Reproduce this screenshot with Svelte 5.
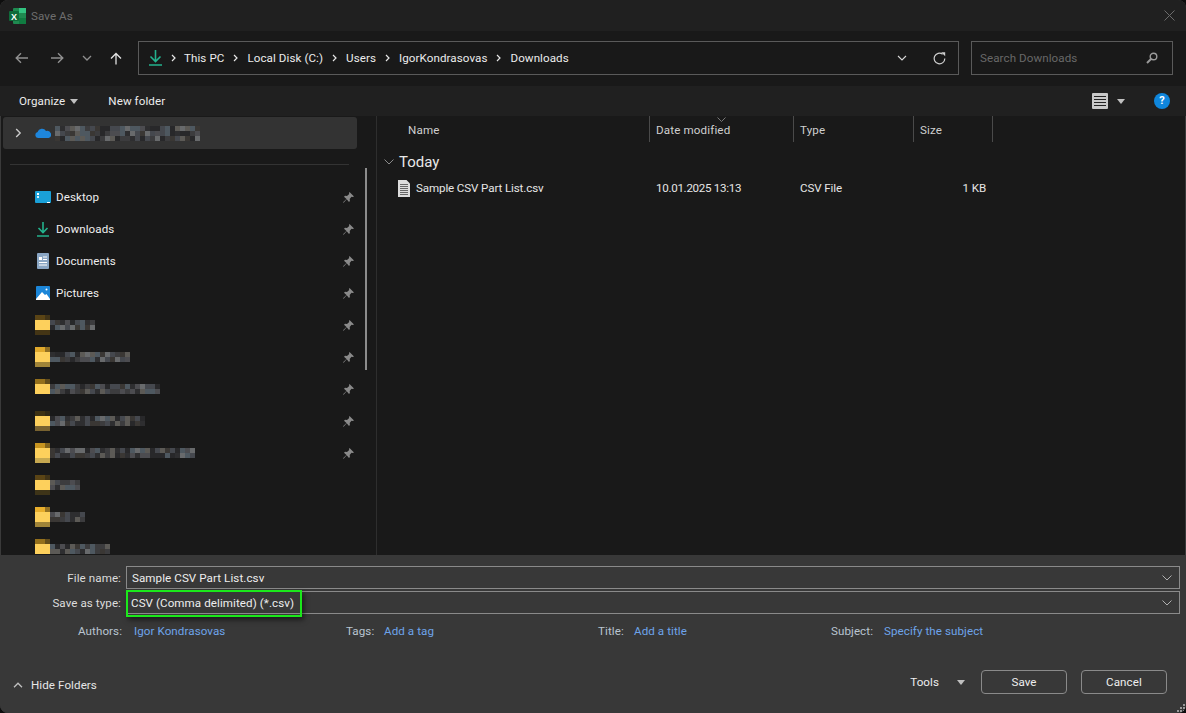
<script lang="ts">
  // fake blur blocks for the hidden folder names
  function mosaic(width: number, seed: number, rows = 2) {
    const cells = [];
    let s = seed * 97 + 13;
    const tones = ['#3c3c3e', '#4c4c50', '#2e2e30', '#5c5a56', '#45484e', '#3a3734', '#686a6c', '#28282a', '#4e5860'];
    for (let y = 0; y < rows; y++) {
      for (let x = 0; x < width; x += 5) {
        s = (s * 31 + 7) % 1009;
        cells.push({ x, y: y * 5, fill: tones[s % tones.length] });
      }
    }
    return cells;
  }

  const pinned = [
    { name: 'Desktop', icon: 'desktop' },
    { name: 'Downloads', icon: 'downloads' },
    { name: 'Documents', icon: 'documents' },
    { name: 'Pictures', icon: 'pictures' },
  ];
  const folders = [
    { width: 45, pin: true, top: '#5a4415', low: '#443515' },
    { width: 80, pin: true, top: '#e0a92c', low: '#a08438' },
    { width: 110, pin: true, top: '#94701c', low: '' },
    { width: 95, pin: true, top: '#3e3214', low: '#786230' },
    { width: 145, pin: true, top: '#c79420', low: '#c6a850' },
    { width: 30, pin: false, top: '#5a4415', low: '#3e3418' },
    { width: 35, pin: false, top: '#e8ae2c', low: '#a08438' },
    { width: 60, pin: false, top: '#94701c', low: '' },
  ];
  const crumbs = ['This PC', 'Local Disk (C:)', 'Users', 'IgorKondrasovas', 'Downloads'];
  const meta = [
    { label: 'Authors:', value: 'Igor Kondrasovas' },
    { label: 'Tags:', value: 'Add a tag' },
    { label: 'Title:', value: 'Add a title' },
    { label: 'Subject:', value: 'Specify the subject' },
  ];
</script>

<div class="window">
  <header class="title">
    <svg class="excel" width="17" height="16" viewBox="0 0 17 16">
      <rect x="4" y="0" width="13" height="16" rx="1" fill="#1f8a50" />
      <rect x="10" y="0" width="7" height="5" fill="#33c481" />
      <rect x="10" y="10" width="7" height="6" fill="#107c41" />
      <rect x="0" y="3" width="10" height="10" rx="1" fill="#0f6b3a" />
      <text x="5" y="11.5" text-anchor="middle" class="excel-x">X</text>
    </svg>
    <span>Save As</span>
    <svg class="close" width="11" height="11" viewBox="0 0 11 11"><path d="M.5.5l10 10M10.500.5l-10 10" stroke="#6c6c6c" fill="none" /></svg>
  </header>

  <nav class="nav">
    <div class="nav-buttons">
      <svg width="14" height="12" viewBox="0 0 14 12"><path d="M13 6H1.500M6 1.200 1.200 6 6 10.800" stroke="#8f8f8f" stroke-width="1.4" fill="none" /></svg>
      <svg width="14" height="12" viewBox="0 0 14 12"><path d="M1 6h11.500M8 1.200 12.800 6 8 10.800" stroke="#8f8f8f" stroke-width="1.4" fill="none" /></svg>
      <svg width="10" height="6" viewBox="0 0 10 6"><path d="M1 1l4 4 4-4" stroke="#8f8f8f" stroke-width="1.3" fill="none" /></svg>
      <svg width="12" height="13" viewBox="0 0 12 13"><path d="M6 12.500V1.500M1 6.500l5-5 5 5" stroke="#e4e4e4" stroke-width="1.3" fill="none" /></svg>
    </div>
    <div class="address">
      <svg width="13" height="16" viewBox="0 0 13 16"><path d="M6.500 0v11M1.500 6.500l5 5 5-5" stroke="#23b28d" stroke-width="1.6" fill="none" /><path d="M0 15h13" stroke="#23b28d" stroke-width="1.6" /></svg>
      {#each crumbs as crumb, i}
        <svg class="sep" class:first={i === 0} width="5" height="8" viewBox="0 0 5 8"><path d="M1 1l3 3-3 3" stroke="#e8e8e8" stroke-width="1.2" fill="none" /></svg>
        <span class="crumb">{crumb}</span>
      {/each}
      <svg class="addr-chevron" width="10" height="6" viewBox="0 0 10 6"><path d="M1 1l4 4 4-4" stroke="#d8d8d8" stroke-width="1.1" fill="none" /></svg>
      <svg class="refresh" width="13" height="13" viewBox="0 0 13 13"><path d="M11.800 6.500A5.300 5.300 0 1 1 9.600 2.200" stroke="#d0d0d0" stroke-width="1.2" fill="none" /><path d="M8.200.2h4v4z" fill="#d0d0d0" /></svg>
    </div>
    <div class="search">
      <span>Search Downloads</span>
      <svg width="12" height="12" viewBox="0 0 12 12"><circle cx="7.500" cy="4.500" r="3.300" stroke="#9a9a9a" stroke-width="1.4" fill="none" /><path d="M5 7 1 11" stroke="#9a9a9a" stroke-width="2" /></svg>
    </div>
  </nav>

  <div class="toolbar">
    <span class="organize">Organize</span>
    <span class="caret"></span>
    <span class="new-folder">New folder</span>
    <svg class="views" width="16" height="16" viewBox="0 0 16 16">
      <rect width="16" height="16" rx="1" fill="#c9c9c9" />
      <path d="M2 3.500h12M2 6.500h12M2 9.500h12M2 12.500h12" stroke="#222" />
    </svg>
    <span class="caret views-caret"></span>
    <span class="help">?</span>
  </div>

  <main class="main">
    <aside class="side">
      <div class="onedrive">
        <svg width="7" height="10" viewBox="0 0 7 10"><path d="M1.200 1l4 4-4 4" stroke="#c8c8c8" stroke-width="1.4" fill="none" /></svg>
        <svg class="cloud" width="16" height="10" viewBox="0 0 16 10"><path d="M3 10a3 3 0 0 1-.4-5.900A4.600 4.600 0 0 1 11 3a3.500 3.500 0 0 1 2.600 7z" fill="#1e86dc" /></svg>
        <svg class="blur" width="145" height="15">
          {#each mosaic(145, 3, 3) as c}
            <rect x={c.x} y={c.y} width="5" height="5" fill={c.fill} />
          {/each}
        </svg>
      </div>
      <div class="rule"></div>
      <ul class="places">
        {#each pinned as item}
          <li>
            <span class="place-icon">
              {#if item.icon === 'desktop'}
                <svg width="16" height="13" viewBox="0 0 16 13"><rect width="16" height="12" rx="1" fill="#1aa0d8" /><rect x="2" y="2" width="2" height="2" fill="#fff" /><rect x="2" y="5" width="2" height="2" fill="#d8f0fa" /><rect x="12" y="11" width="3" height="1" fill="#fff" /></svg>
              {:else if item.icon === 'downloads'}
                <svg width="12" height="15" viewBox="0 0 12 15"><path d="M6 0v10M1.500 6l4.500 4.500L10.500 6" stroke="#23b28d" stroke-width="1.6" fill="none" /><path d="M0 14h12" stroke="#23b28d" stroke-width="1.6" /></svg>
              {:else if item.icon === 'documents'}
                <svg width="12" height="16" viewBox="0 0 12 16"><rect width="12" height="16" rx="1" fill="#8aa6c4" /><path d="M2 4h3v3H2z" fill="#fff" /><path d="M6 4h4M6 6.500h4M2 9.500h8M2 12h8" stroke="#fff" /></svg>
              {:else}
                <svg width="14" height="14" viewBox="0 0 14 14"><rect width="14" height="14" rx="1" fill="#1c86d8" /><path d="M0 13 6 6l3 3 1.500-1 3.500 5v1H0z" fill="#fff" /><circle cx="10.500" cy="3.500" r="1" fill="#fff" /></svg>
              {/if}
            </span>
            <span class="place-name">{item.name}</span>
            <svg class="pin" width="11" height="11" viewBox="0 0 11 11"><path d="M6.500 0 11 4.500 9.800 5 8.500 4.800 6.700 7l.2 2L6 10 3.700 7.300.6 10.800 0 10.300 3.500 7 1 4.800l1-1 2 .2 2.200-1.900L6 1z" fill="#8a8a8a" /></svg>
          </li>
        {/each}
        {#each folders as folder, i}
          <li>
            <svg class="mosaic" width={folder.width + 15} height="20">
              <rect x="0" y="0" width="10" height="5" fill={folder.top} />
              <rect x="10" y="0" width="5" height="5" fill={folder.top} opacity="0.6" />
              <rect x="0" y="5" width="15" height="10" fill="#fdd05c" />
              {#if folder.low}
                <rect x="0" y="15" width="15" height="5" fill={folder.low} />
              {/if}
              {#each mosaic(folder.width, i + 5) as c}
                <rect x={c.x + 15} y={c.y + 5} width="5" height="5" fill={c.fill} />
              {/each}
            </svg>
            {#if folder.pin}
              <svg class="pin" width="11" height="11" viewBox="0 0 11 11"><path d="M6.500 0 11 4.500 9.800 5 8.500 4.800 6.700 7l.2 2L6 10 3.700 7.300.6 10.800 0 10.300 3.500 7 1 4.800l1-1 2 .2 2.200-1.900L6 1z" fill="#8a8a8a" /></svg>
            {/if}
          </li>
        {/each}
      </ul>
      <div class="scrollbar"></div>
    </aside>

    <section class="files">
      <div class="head">
        <span class="col-name">Name</span>
        <span class="col-date">Date modified<svg class="sort" width="9" height="5" viewBox="0 0 9 5"><path d="M.5.500l4 4 4-4" stroke="#777" fill="none" /></svg></span>
        <span class="col-type">Type</span>
        <span class="col-size">Size</span>
      </div>
      <div class="group">
        <svg width="10" height="6" viewBox="0 0 10 6"><path d="M.5.500 5 5 9.500.5" stroke="#8a8a8a" fill="none" /></svg>
        <span>Today</span>
      </div>
      <div class="file">
        <span class="col-name file-name">
          <svg width="12" height="17" viewBox="0 0 12 17"><path d="M0 0h8.500L12 3.500V17H0z" fill="#dcdcdc" /><path d="M2 4.500h8M2 6.500h8M2 8.500h8M2 10.500h8M2 12.500h8M2 14.500h8" stroke="#666" /></svg>
          Sample CSV Part List.csv
        </span>
        <span class="col-date">10.01.2025 13:13</span>
        <span class="col-type">CSV File</span>
        <span class="col-size size-val">1 KB</span>
      </div>
    </section>
  </main>

  <footer class="bottom">
    <div class="field">
      <label for="file-name">File name:</label>
      <div class="combo">
        <input id="file-name" value="Sample CSV Part List.csv" />
        <svg width="10" height="6" viewBox="0 0 10 6"><path d="M.5.500 5 5 9.500.5" stroke="#b0b0b0" fill="none" /></svg>
      </div>
    </div>
    <div class="field second">
      <label for="file-type">Save as type:</label>
      <div class="combo">
        <input id="file-type" class="type" value="CSV (Comma delimited) (*.csv)" />
        <svg width="10" height="6" viewBox="0 0 10 6"><path d="M.5.500 5 5 9.500.5" stroke="#b0b0b0" fill="none" /></svg>
        <div class="highlight"></div>
      </div>
    </div>
    <div class="meta">
      {#each meta as m}
        <span class="meta-label">{m.label}</span>
        <span class="meta-value">{m.value}</span>
      {/each}
    </div>
    <div class="actions">
      <svg class="hide-chevron" width="10" height="6" viewBox="0 0 10 6"><path d="M1 5.200 5 1.200l4 4" stroke="#c0c0c0" stroke-width="1.300" fill="none" /></svg>
      <span class="hide">Hide Folders</span>
      <span class="tools">Tools</span>
      <span class="caret tools-caret"></span>
      <button class="save">Save</button>
      <button class="cancel">Cancel</button>
    </div>
    <svg class="grip" width="8" height="8" viewBox="0 0 8 8"><path d="M6 0h2v2H6zM3 3h2v2H3zM6 3h2v2H6zM0 6h2v2H0zM3 6h2v2H3zM6 6h2v2H6z" fill="#9a9a9a" /></svg>
  </footer>
</div>

<style>
  :global(body) { margin: 0; background: #0e0e0e; }
  .window {
    position: relative; width: 1186px; height: 713px; box-sizing: border-box; overflow: hidden;
    display: flex; flex-direction: column; border-radius: 8px;
    font: 11.6px/16px Roboto, "Noto Sans", sans-serif; letter-spacing: 0.08px; color: #e6e6e6;
    background: #191919; box-shadow: inset 0 0 0 1px #3a3a3a;
  }
  .title { height: 31px; flex: none; display: flex; align-items: center; padding: 0 11px 0 9px; background: #202020; color: #6e6e6e; }
  .excel { margin-right: 5px; }
  .excel-x { font: bold 9px "Liberation Sans", sans-serif; fill: #fff; }
  .close { margin-left: auto; }

  .nav { height: 55px; flex: none; display: flex; align-items: flex-start; padding-top: 10px; box-sizing: border-box; background: #191919; }
  .nav-buttons { width: 138px; height: 34px; flex: none; display: flex; align-items: center; box-sizing: border-box; padding-left: 15px; }
  .nav-buttons svg:nth-child(1) { margin-right: 21px; }
  .nav-buttons svg:nth-child(2) { margin-right: 18px; }
  .nav-buttons svg:nth-child(3) { margin-right: 18px; }
  .address {
    width: 821px; height: 34px; box-sizing: border-box; flex: none; display: flex; align-items: center;
    padding: 0 12px 0 10px; border: 1px solid #5a5a5a; background: #191919;
  }
  .sep { margin: 0 9px; }
  .sep.first { margin-right: 8px; }
  .crumb { color: #ececec; }
  .addr-chevron { margin-left: auto; margin-right: 26px; }
  .search {
    width: 202px; height: 34px; box-sizing: border-box; margin-left: 12px; display: flex; align-items: center;
    justify-content: space-between; padding: 0 14px 0 8px; border: 1px solid #5a5a5a; color: #686868;
  }

  .toolbar { height: 30px; flex: none; display: flex; align-items: center; padding-left: 19px; background: #202020; color: #ececec; }
  .caret { width: 0; height: 0; border: 4.500px solid transparent; border-top: 5px solid #c0c0c0; border-bottom: 0; }
  .organize { margin-right: 5px; }
  .new-folder { margin-left: 30px; }
  .views { margin-left: auto; }
  .views-caret { margin-left: 9px; }
  .help {
    width: 16px; height: 16px; margin: 0 16px 0 29px; border-radius: 50%; background: #0f86dc; color: #fff;
    font: bold 11px/16px Roboto, sans-serif; text-align: center;
  }

  .main { flex: 1; min-height: 0; display: flex; }
  .side { position: relative; width: 377px; flex: none; box-sizing: border-box; overflow: hidden; border-right: 1px solid #2e2e2e; }
  .onedrive {
    height: 32px; width: 354px; margin: 1px 0 0 3px; display: flex; align-items: center; padding-left: 12px; box-sizing: border-box;
    background: #333; border-radius: 3px;
  }
  .cloud { margin-left: 13px; }
  .blur { margin-left: 4px; }
  .rule { height: 1px; margin: 15px 27px 0 10px; background: #333; }
  .places { list-style: none; margin: 16px 0 0; padding: 0; }
  .places li { height: 32px; display: flex; align-items: center; padding-left: 35px; position: relative; }
  .place-icon { width: 21px; display: flex; justify-content: center; padding-right: 5px; box-sizing: border-box; }
  .place-name { color: #eee; }
  .pin { position: absolute; left: 343px; top: 11px; }
  .mosaic { display: block; }
  .scrollbar { position: absolute; left: 365px; top: 52px; width: 2px; height: 202px; background: #8c8c8c; }

  .files { flex: 1; position: relative; min-width: 0; }
  .head { height: 26px; display: flex; align-items: center; color: #cfcfcf; letter-spacing: 0.15px; }
  .col-name { width: 272px; box-sizing: border-box; padding-left: 31px; flex: none; }
  .col-date { width: 144px; box-sizing: border-box; padding-left: 6px; flex: none; position: relative; }
  .col-type { width: 120px; box-sizing: border-box; padding-left: 6px; flex: none; }
  .col-size { width: 80px; box-sizing: border-box; padding-left: 6px; flex: none; }
  .head span { height: 26px; line-height: 29px; }
  .head .col-date, .head .col-type, .head .col-size { border-left: 1px solid #4a4a4a; }
  .head .col-size { border-right: 1px solid #4a4a4a; }
  .sort { position: absolute; left: 67px; top: 1px; }
  .group { height: 38px; box-sizing: border-box; padding: 1px 0 0 7px; display: flex; align-items: center; gap: 5px; font-size: 15px; letter-spacing: 0; color: #e8e8e8; }
  .file { display: flex; align-items: center; height: 20px; margin-top: -2px; color: #e6e6e6; letter-spacing: -0.12px; }
  .file-name { display: flex; align-items: center; gap: 6px; padding-left: 21px; }
  .file .col-date { padding-left: 7px; letter-spacing: -0.3px; }
  .file .col-type { padding-left: 7px; }
  .size-val { text-align: right; padding-right: 7px; }

  .bottom { position: relative; height: 158px; flex: none; box-sizing: border-box; padding-top: 11px; background: #383838; }
  .field { display: flex; align-items: center; height: 23px; }
  .second { margin-top: 2px; }
  .field label { width: 121px; text-align: right; margin-right: 5px; color: #ddd; flex: none; }
  .combo { position: relative; width: 1054px; height: 23px; box-sizing: border-box; border: 1px solid #8a8a8a; display: flex; align-items: center; padding-right: 7px; }
  input {
    flex: 1; min-width: 0; background: none; border: 0; outline: 0; padding: 0 0 0 5px; font: inherit; letter-spacing: inherit; color: #eee;
  }
  input.type { padding-left: 4px; }
  .highlight {
    position: absolute; left: -1px; top: -2px; width: 172px; height: 23px;
    border: 2px solid #1be81b; box-shadow: 2px 3px 5px rgba(0, 0, 0, 0.5);
  }
  .meta { display: grid; grid-template-columns: 134px 212px 38px 214px 36px 197px 53px auto; margin-top: 5px; height: 24px; align-items: center; }
  .meta-label { color: #b9c4d0; }
  .meta-label:first-child { padding-left: 78px; }
  .meta-value { color: #6ea4ea; }
  .actions { display: flex; align-items: center; margin-top: 27px; padding: 0 19px 0 13px; }
  .hide-chevron { margin-top: 6px; }
  .hide { margin: 6px 0 0 8px; color: #e6e6e6; }
  .tools { margin-left: auto; color: #eee; }
  .tools-caret { margin-left: 18px; }
  button {
    width: 86px; height: 24px; padding: 0; background: #383838; border: 1px solid #8a8a8a; border-radius: 4px;
    font: inherit; letter-spacing: inherit; color: #eee;
  }
  .save { margin-left: 16px; }
  .cancel { margin-left: 14px; }
  .grip { position: absolute; right: 1px; bottom: 1px; }
</style>
